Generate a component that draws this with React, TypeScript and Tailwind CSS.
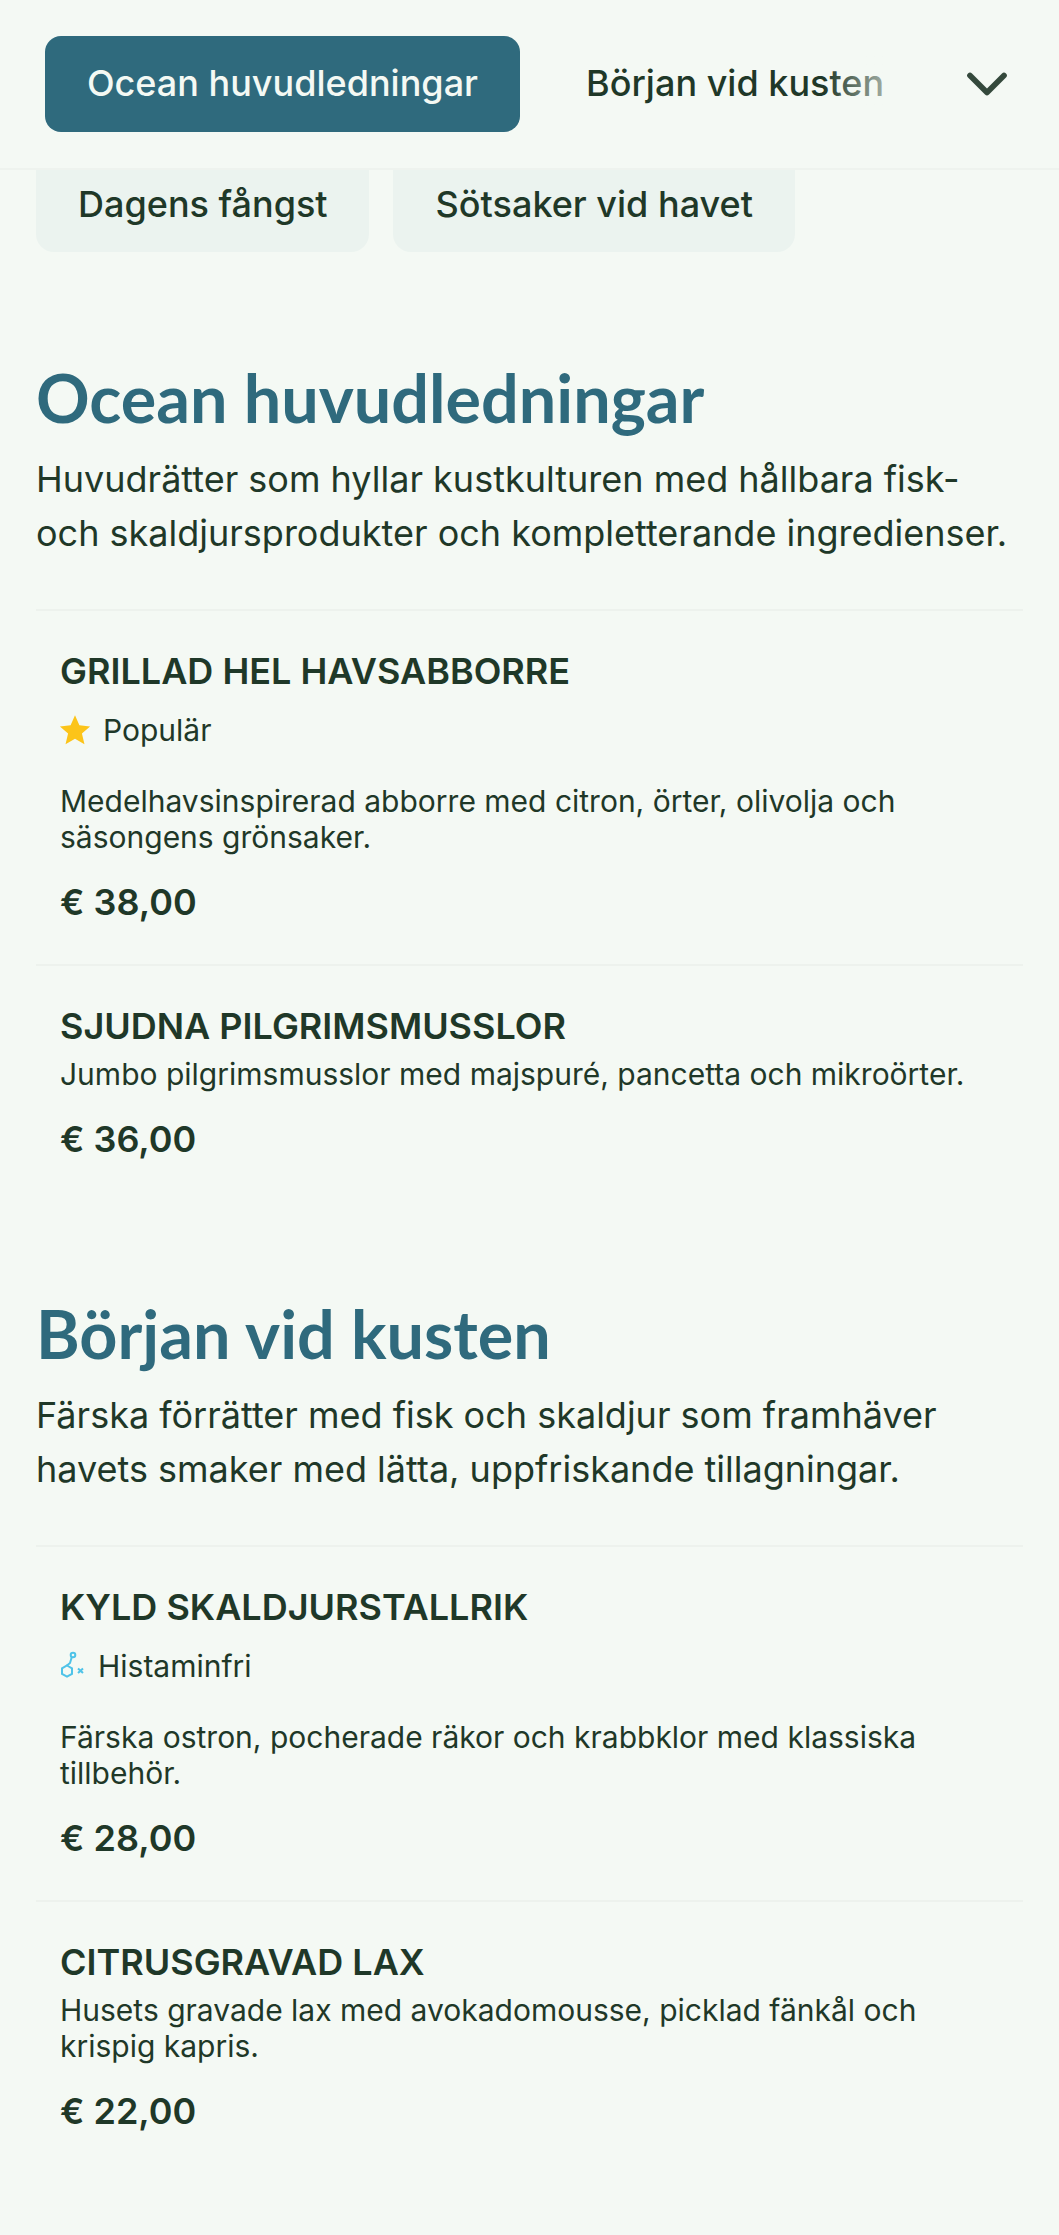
import { ChevronDown } from "lucide-react";

const sections = [
  {
    title: "Ocean huvudledningar",
    intro: "Huvudrätter som hyllar kustkulturen med hållbara fisk- och skaldjursprodukter och kompletterande ingredienser.",
    items: [
      {
        name: "GRILLAD HEL HAVSABBORRE",
        tag: "star",
        desc: "Medelhavsinspirerad abborre med citron, örter, olivolja och säsongens grönsaker.",
        price: "€ 38,00",
      },
      {
        name: "SJUDNA PILGRIMSMUSSLOR",
        desc: "Jumbo pilgrimsmusslor med majspuré, pancetta och mikroörter.",
        price: "€ 36,00",
      },
    ],
  },
  {
    title: "Början vid kusten",
    intro: "Färska förrätter med fisk och skaldjur som framhäver havets smaker med lätta, uppfriskande tillagningar.",
    items: [
      {
        name: "KYLD SKALDJURSTALLRIK",
        tag: "histamine",
        desc: "Färska ostron, pocherade räkor och krabbklor med klassiska tillbehör.",
        price: "€ 28,00",
      },
      {
        name: "CITRUSGRAVAD LAX",
        desc: "Husets gravade lax med avokadomousse, picklad fänkål och krispig kapris.",
        price: "€ 22,00",
      },
    ],
  },
];

function StarIcon() {
  return (
    <svg viewBox="0 0 24 24" className="-ml-[1px] h-[32px] w-[32px] fill-[#fcc419]">
      <path d="M12 1l3.300 7.500 8 .8-6.100 5.400 1.900 8-7.100-4.200-7.100 4.200 1.900-8-6.100-5.400 8-.8z" />
    </svg>
  );
}

function HistamineIcon() {
  return (
    <svg viewBox="0 0 26 30" className="h-[30px] w-[26px] fill-none stroke-[#4fc3e8] stroke-2">
      <circle cx="13" cy="4" r="2.300" />
      <path d="M11.800 6l-1.800 6-3 2.500" />
      <path d="M7 14.500l5 2.800v5.600l-5 2.800-5-2.800v-5.600z" />
      <path d="M18 17.500l5 4.600M23 17.500l-5 4.600" />
    </svg>
  );
}

export default function App() {
  return (
    <div className="min-h-[2235px] bg-[#f4f9f4] font-['Inter',sans-serif] text-[#1f3828]">
      <header className="flex h-[170px] items-center border-b-2 border-[#eef3ee] pl-[45px] pr-[38px]">
        <button className="flex h-[96px] w-[475px] items-center justify-center rounded-[16px] bg-[#2f6a7d] pb-[2px] text-[36px] font-medium text-[#f4f9f4]">
          Ocean huvudledningar
        </button>
        <div className="relative ml-[66px] pb-[2px] text-[36px] font-medium">
          Början vid kusten
          <div className="absolute inset-y-0 right-0 w-[60px] bg-gradient-to-r from-transparent to-[#f4f9f4]/60" />
        </div>
        <ChevronDown className="ml-auto h-[68px] w-[68px] text-[#34493c]" strokeWidth={2} />
      </header>

      <div className="flex gap-[24px] px-[36px]">
        <div className="flex h-[82px] items-center rounded-b-[18px] bg-[#ebf3ef] pb-[14px] pl-[42px] pr-[41px] text-[36px] font-medium">Dagens fångst</div>
        <div className="flex h-[82px] items-center rounded-b-[18px] bg-[#ebf3ef] pb-[14px] pl-[43px] pr-[42px] text-[36px] font-medium">Sötsaker vid havet</div>
      </div>

      <main className="px-[36px] pt-[103px]">
        {sections.map((s) => (
          <section key={s.title} className="mb-[90px]">
            <h2 className="font-['Lato',sans-serif] text-[66.5px] font-bold leading-[84px] text-[#2f6a7d]">{s.title}</h2>
            <p className="mt-[13px] text-[36px] leading-[54px]">{s.intro}</p>
            <div className="mt-[49px]">
              {s.items.map((item) => (
                <article key={item.name} className="border-t-2 border-[#edf2ed] px-[24px] pb-[38px] pt-[36px]">
                  <h3 className="text-[36px] font-semibold leading-[48px]">{item.name}</h3>
                  {item.tag === "star" && (
                    <div className="mb-[30px] mt-[12px] flex h-[46px] items-center gap-[12px] text-[30px]">
                      <StarIcon />
                      Populär
                    </div>
                  )}
                  {item.tag === "histamine" && (
                    <div className="mb-[30px] mt-[12px] flex h-[46px] items-center gap-[12px] text-[30px]">
                      <HistamineIcon />
                      Histaminfri
                    </div>
                  )}
                  {!item.tag && <div className="h-[6px]" />}
                  <p className="text-[30px] leading-[36px]">{item.desc}</p>
                  <div className="mt-[23px] text-[36px] font-semibold leading-[48px]">{item.price}</div>
                </article>
              ))}
            </div>
          </section>
        ))}
      </main>
    </div>
  );
}
